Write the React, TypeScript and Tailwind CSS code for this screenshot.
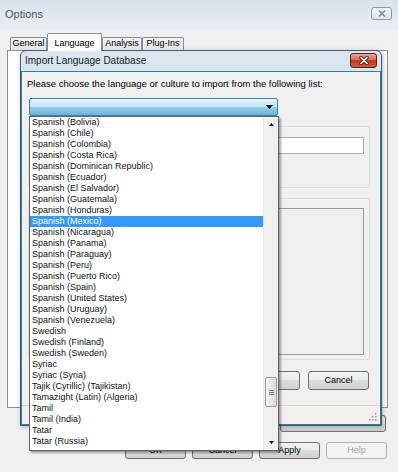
import React from "react";

const cultures = [
  "Spanish (Bolivia)",
  "Spanish (Chile)",
  "Spanish (Colombia)",
  "Spanish (Costa Rica)",
  "Spanish (Dominican Republic)",
  "Spanish (Ecuador)",
  "Spanish (El Salvador)",
  "Spanish (Guatemala)",
  "Spanish (Honduras)",
  "Spanish (Mexico)",
  "Spanish (Nicaragua)",
  "Spanish (Panama)",
  "Spanish (Paraguay)",
  "Spanish (Peru)",
  "Spanish (Puerto Rico)",
  "Spanish (Spain)",
  "Spanish (United States)",
  "Spanish (Uruguay)",
  "Spanish (Venezuela)",
  "Swedish",
  "Swedish (Finland)",
  "Swedish (Sweden)",
  "Syriac",
  "Syriac (Syria)",
  "Tajik (Cyrillic) (Tajikistan)",
  "Tamazight (Latin) (Algeria)",
  "Tamil",
  "Tamil (India)",
  "Tatar",
  "Tatar (Russia)",
];

function WinButton({ label, w, disabled }: { label: string; w: string; disabled?: boolean }) {
  if (disabled) {
    return (
      <div className={`${w} h-full rounded-[3px] border border-[#adb2b5] bg-[#f4f4f4] text-[#a3a3a3] text-[9px] flex items-center justify-center`}>
        {label}
      </div>
    );
  }
  return (
    <div
      className={`${w} h-full rounded-[3px] border border-[#707070] bg-[linear-gradient(#f2f2f2_0%,#ebebeb_50%,#dddddd_50%,#cfcfcf_100%)] text-[9px] flex items-center justify-center`}
    >
      {label}
    </div>
  );
}

function Tab({ label, w, selected }: { label: string; w: string; selected?: boolean }) {
  if (selected) {
    return (
      <div className={`${w} h-[18px] -mb-px border border-b-0 border-[#898c95] rounded-t-[2px] bg-[#fcfcfc] text-[9px] flex items-start justify-center pt-[3px]`}>
        {label}
      </div>
    );
  }
  return (
    <div className={`${w} h-[13px] border border-b-0 border-[#898c95] rounded-t-[2px] bg-linear-to-b from-[#f6f6f6] to-[#e2e2e2] text-[9px] flex items-center justify-center`}>
      {label}
    </div>
  );
}

function ImportDialog() {
  return (
    <div className="absolute left-[20px] top-[50px] w-[362px] h-[376px] flex flex-col rounded-t-[6px] border border-[#44596b] bg-linear-to-b from-[#dbe6f1] to-[#c6d7e9] shadow-[1px_1px_4px_rgba(0,0,0,0.25)]">
      <div className="h-[20px] flex items-start justify-between">
        <div className="pl-[4px] pt-[4px] text-[10px] leading-[12px] text-[#15202c]">Import Language Database</div>
        <div className="mt-[2px] mr-[4px] w-[27px] h-[15px] rounded-[3px] border border-[#5a2018] bg-[linear-gradient(#eaa99b_0%,#d56b5b_45%,#c13b27_50%,#d8563f_100%)] flex items-center justify-center">
          <svg width="10" height="9" viewBox="0 0 10 9">
            <path d="M2 1.5 L8 7.5 M8 1.5 L2 7.5" stroke="#4a1c15" strokeWidth="3.4" strokeLinecap="round" />
            <path d="M2 1.5 L8 7.5 M8 1.5 L2 7.5" stroke="#ffffff" strokeWidth="1.7" strokeLinecap="round" />
          </svg>
        </div>
      </div>
      <div className="flex-1 flex flex-col border border-[#1f8797] bg-[#f0f0f0]">
        <div className="mt-[6px] pl-[5px] h-[12px] text-[9.5px] leading-[12px] whitespace-nowrap">
          Please choose the language or culture to import from the following list:
        </div>
        <div className="mt-[8px] ml-[7px] w-[249px] h-[18px] rounded-[2px] border border-[#3c7fb1] bg-[linear-gradient(#e5f4fc_0%,#c4e5f6_50%,#98d1ef_50%,#68b3db_100%)] flex items-center justify-end pr-[4px]">
          <svg width="7" height="4" viewBox="0 0 7 4">
            <path d="M0 0 H7 L3.5 4 Z" fill="#000" />
          </svg>
        </div>
        <div className="mt-[10px] ml-[6px] mr-[10px] h-[62px] rounded-[3px] border border-[#d5dfe5] px-[5px] pt-[10px]">
          <div className="h-[17px] border border-[#abadb3] bg-white" />
        </div>
        <div className="mt-[10px] ml-[6px] mr-[10px] h-[162px] rounded-[3px] border border-[#d5dfe5] px-[5px] pt-[9px] pb-[4px] flex flex-col">
          <div className="flex-1 border border-[#9a9a9a] bg-[#f0f0f0]" />
        </div>
        <div className="mt-[11px] h-[19px] flex justify-end gap-[8px] pr-[11px]">
          <WinButton label="OK" w="w-[60px]" />
          <WinButton label="Cancel" w="w-[61px]" />
        </div>
        <div className="flex-1" />
        <div className="h-[19px] border-t border-[#d9d4d4] bg-[#f3efef] flex items-end justify-end pr-[3px] pb-[3px]">
          <svg width="9" height="9" viewBox="0 0 9 9">
            <g fill="#9a9a9a">
              <rect x="7" y="1" width="1.5" height="1.5" />
              <rect x="4" y="4" width="1.5" height="1.5" />
              <rect x="7" y="4" width="1.5" height="1.5" />
              <rect x="1" y="7" width="1.5" height="1.5" />
              <rect x="4" y="7" width="1.5" height="1.5" />
              <rect x="7" y="7" width="1.5" height="1.5" />
            </g>
          </svg>
        </div>
      </div>
    </div>
  );
}

function DropList() {
  return (
    <div className="absolute left-[29px] top-[116px] w-[250px] h-[335px] border border-[#646464] bg-white shadow-[2px_2px_2px_rgba(0,0,0,0.35)] flex">
      <div className="flex-1 flex flex-col">
        {cultures.map((c) => (
          <div
            key={c}
            className={`h-[11px] text-[9px] leading-[11px] pl-[2px] whitespace-nowrap ${
              c === "Spanish (Mexico)" ? "bg-[#3399ff] text-white" : "text-[#111]"
            }`}
          >
            {c}
          </div>
        ))}
      </div>
      <div className="w-[15px] flex flex-col bg-[#f0f0f0] border-l border-[#e6e6e6]">
        <div className="h-[15px] flex items-center justify-center">
          <svg width="5" height="3" viewBox="0 0 5 3">
            <path d="M0 3 L2.5 0 L5 3 Z" fill="#000" />
          </svg>
        </div>
        <div className="flex-1 flex flex-col">
          <div className="mt-[245px] mx-[1px] h-[30px] rounded-[2px] border border-[#9b9b9b] bg-linear-to-r from-[#f4f4f4] to-[#dadada] flex flex-col items-center justify-center gap-px">
            <div className="w-[5px] h-px bg-[#707070]" />
            <div className="w-[5px] h-px bg-[#707070]" />
            <div className="w-[5px] h-px bg-[#707070]" />
          </div>
        </div>
        <div className="h-[15px] flex items-center justify-center">
          <svg width="5" height="3" viewBox="0 0 5 3">
            <path d="M0 0 H5 L2.5 3 Z" fill="#000" />
          </svg>
        </div>
      </div>
    </div>
  );
}

export default function App() {
  return (
    <div className="relative w-[398px] h-[472px] overflow-hidden bg-[#f0f0f0] font-['Liberation_Sans',Arial,sans-serif] text-black">
      {/* Options window */}
      <div className="h-[29px] flex items-start justify-between bg-linear-to-b from-[#d9e2eb] to-[#e8edf2]">
        <div className="pl-[5px] pt-[8px] text-[11px] leading-[13px] text-[#4a5868]">Options</div>
        <div className="mt-[7px] mr-[6px] w-[21px] h-[13px] rounded-[3px] border border-[#8c9aab] bg-linear-to-b from-[#f2f5f8] to-[#dce3ea] flex items-center justify-center">
          <svg width="8" height="7" viewBox="0 0 8 7">
            <path d="M1 0.5 L7 6.5 M7 0.5 L1 6.5" stroke="#7d8896" strokeWidth="1.5" />
          </svg>
        </div>
      </div>
      <div className="relative z-10 h-[21px] flex items-end pl-[10px]">
        <Tab label="General" w="w-[37px]" />
        <Tab label="Language" w="w-[55px]" selected />
        <Tab label="Analysis" w="w-[40px]" />
        <Tab label="Plug-Ins" w="w-[42px]" />
      </div>
      <div className="ml-[7px] mr-[10px] h-[358px] border border-[#898c95] bg-[#fcfcfc]" />
      <div className="mt-[7px] h-[17px] flex justify-end pr-[12px]">
        <WinButton label="Restore Defaults" w="w-[106px]" />
      </div>
      <div className="mt-[10px] h-[17px] flex justify-end gap-[6px] pr-[11px]">
        <WinButton label="OK" w="w-[61px]" />
        <WinButton label="Cancel" w="w-[61px]" />
        <WinButton label="Apply" w="w-[61px]" />
        <WinButton label="Help" w="w-[61px]" disabled />
      </div>

      <ImportDialog />
      <DropList />
    </div>
  );
}
